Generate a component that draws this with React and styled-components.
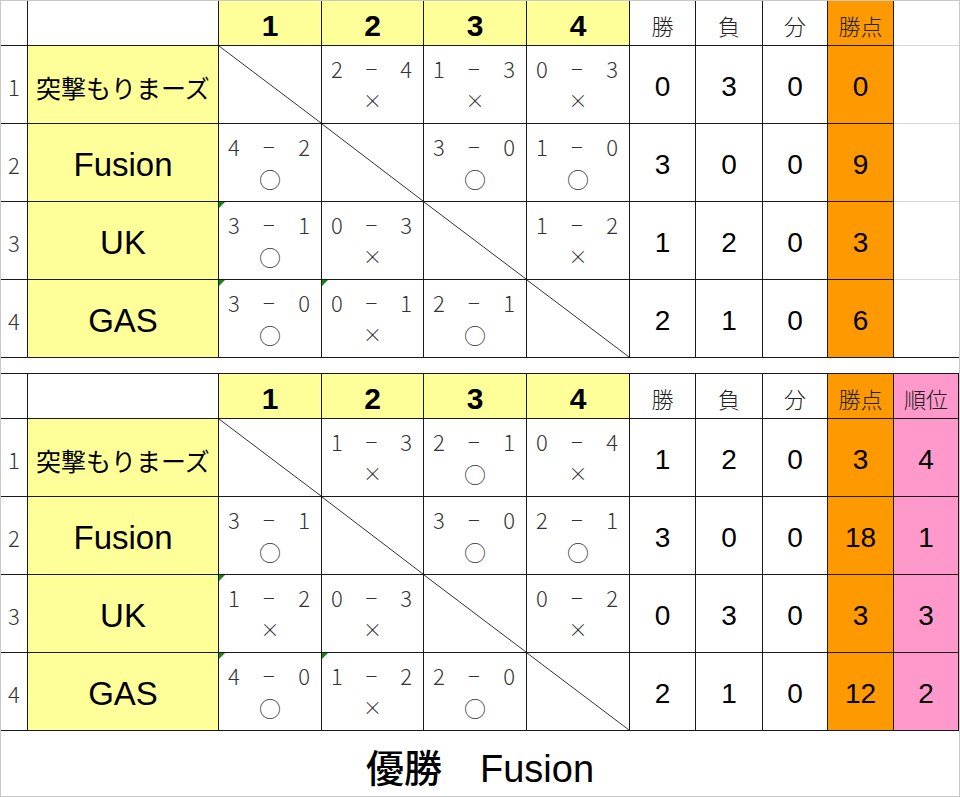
import React from 'react';
import styled, { createGlobalStyle } from 'styled-components';

const GlobalStyle = createGlobalStyle`
  html, body {
    margin: 0;
    padding: 0;
    background: #fff;
  }
  body {
    font-family: "Liberation Sans", "Noto Sans CJK JP", sans-serif;
    color: #000;
  }
`;

const YELLOW = '#ffff99';
const ORANGE = '#ff9900';
const PINK = '#ff99cc';
const LINE = '#1a1a1a';
const GRID = '#d9d9d9';

const Sheet = styled.div`
  width: 960px;
  height: 797px;
  box-sizing: border-box;
  border: 1px solid #c8c8c8;
  background: #fff;
  display: flex;
  flex-direction: column;
`;

const Table = styled.div`
  display: grid;
  grid-template-columns: 27px 191px 103px 102px 103px 103px 66px 67px 65px 66px 1fr;
  grid-template-rows: 45px repeat(4, 78px);
`;

const Cell = styled.div`
  box-sizing: border-box;
  position: relative;
  display: flex;
  align-items: center;
  justify-content: center;
  background: ${(p) => p.$bg || '#fff'};
  border-right: ${(p) => (p.$open ? 'none' : `1px solid ${LINE}`)};
  border-bottom: 1px solid ${(p) => (p.$light ? GRID : LINE)};
`;

const RowNum = styled(Cell)`
  font-family: "Noto Sans CJK JP", sans-serif;
  font-weight: 300;
  font-size: 22px;
  color: #333;
  padding-top: 2px;
`;

const TeamName = styled(Cell)`
  background: ${YELLOW};
  font-size: ${(p) => (p.$jp ? '25px' : '33px')};
  padding-top: 4px;
`;

const HeadNum = styled(Cell)`
  background: ${YELLOW};
  font-size: 30px;
  font-weight: bold;
  padding-top: 6px;
`;

const StatHead = styled(Cell)`
  font-family: "Noto Sans CJK JP", sans-serif;
  font-weight: 300;
  font-size: 22px;
  color: #222;
  padding-top: 4px;
`;

const StatValue = styled(Cell)`
  font-size: 28px;
  padding-top: 4px;
`;

const DiagCell = styled(Cell)`
  background: linear-gradient(
    to top right,
    transparent calc(50% - 0.8px),
    #333 50%,
    transparent calc(50% + 0.8px)
  );
`;

const ScoreCell = styled(Cell)`
  flex-direction: column;
  justify-content: flex-start;
  font-family: "Noto Sans CJK JP", sans-serif;
  font-weight: 300;
  color: #333;

  &::before {
    content: '';
    display: ${(p) => (p.$mark ? 'block' : 'none')};
    position: absolute;
    left: 0;
    top: 0;
    border-top: 6px solid #128a12;
    border-right: 6px solid transparent;
  }
`;

const ScoreLine = styled.div`
  align-self: stretch;
  display: flex;
  justify-content: space-between;
  padding: 0 11px 0 9px;
  margin-top: 7px;
  font-size: 22px;
  line-height: 30px;
`;

const Mark = styled.div`
  font-size: ${(p) => (p.$win ? '22px' : '19px')};
  line-height: 30px;
  margin-top: 2px;
`;

const Gap = styled.div`
  height: 16px;
  box-sizing: border-box;
  border-bottom: 1px solid ${LINE};
`;

const Title = styled.div`
  flex: 1;
  display: flex;
  align-items: center;
  justify-content: center;
  font-size: 38px;
  font-weight: 500;
  padding-top: 4px;
`;

const teams = ['突撃もりまーズ', 'Fusion', 'UK', 'GAS'];

const marks = [
  [false, false, false, false],
  [false, false, false, false],
  [true, false, false, false],
  [true, true, false, false],
];

const first = {
  rank: false,
  rows: [
    { scores: [null, '2-4', '1-3', '0-3'], stats: [0, 3, 0], pts: 0 },
    { scores: ['4-2', null, '3-0', '1-0'], stats: [3, 0, 0], pts: 9 },
    { scores: ['3-1', '0-3', null, '1-2'], stats: [1, 2, 0], pts: 3 },
    { scores: ['3-0', '0-1', '2-1', null], stats: [2, 1, 0], pts: 6 },
  ],
};

const second = {
  rank: true,
  rows: [
    { scores: [null, '1-3', '2-1', '0-4'], stats: [1, 2, 0], pts: 3, place: 4 },
    { scores: ['3-1', null, '3-0', '2-1'], stats: [3, 0, 0], pts: 18, place: 1 },
    { scores: ['1-2', '0-3', null, '0-2'], stats: [0, 3, 0], pts: 3, place: 3 },
    { scores: ['4-0', '1-2', '2-0', null], stats: [2, 1, 0], pts: 12, place: 2 },
  ],
};

const Score = ({ value, mark }) => {
  const [a, b] = value.split('-');
  const win = Number(a) > Number(b);
  return (
    <ScoreCell $mark={mark}>
      <ScoreLine>
        <span>{a}</span>
        <span>−</span>
        <span>{b}</span>
      </ScoreLine>
      <Mark $win={win}>{win ? '○' : '×'}</Mark>
    </ScoreCell>
  );
};

const League = ({ data }) => (
  <Table>
    <RowNum />
    <Cell />
    {[1, 2, 3, 4].map((n) => (
      <HeadNum key={n}>{n}</HeadNum>
    ))}
    <StatHead>勝</StatHead>
    <StatHead>負</StatHead>
    <StatHead>分</StatHead>
    <StatHead $bg={ORANGE}>勝点</StatHead>
    {data.rank ? (
      <StatHead $bg={PINK}>順位</StatHead>
    ) : (
      <Cell $light $open />
    )}

    {data.rows.map((row, i) => (
      <React.Fragment key={i}>
        <RowNum>{i + 1}</RowNum>
        <TeamName $jp={i === 0}>{teams[i]}</TeamName>
        {row.scores.map((s, j) =>
          s ? <Score key={j} value={s} mark={marks[i][j]} /> : <DiagCell key={j} />
        )}
        {row.stats.map((v, j) => (
          <StatValue key={j}>{v}</StatValue>
        ))}
        <StatValue $bg={ORANGE}>{row.pts}</StatValue>
        {data.rank ? (
          <StatValue $bg={PINK}>{row.place}</StatValue>
        ) : (
          <Cell $light={i < 3} $open />
        )}
      </React.Fragment>
    ))}
  </Table>
);

export default function App() {
  return (
    <>
      <GlobalStyle />
      <Sheet>
        <League data={first} />
        <Gap />
        <League data={second} />
        <Title>優勝　Fusion</Title>
      </Sheet>
    </>
  );
}
